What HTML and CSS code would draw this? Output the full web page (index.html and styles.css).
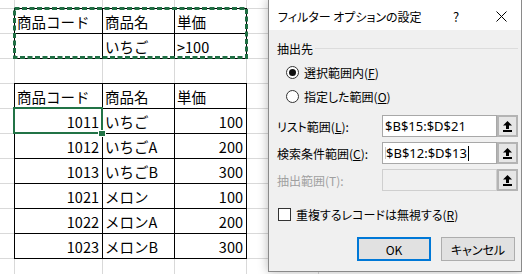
FILE: index.html
```html
<!DOCTYPE html>
<html lang="ja">
<head>
<meta charset="utf-8">
<title>フィルター オプションの設定</title>
<link rel="stylesheet" href="styles.css">
</head>
<body>
<div class="sheet">
  <div class="crit">
    <table class="tbl">
      <colgroup><col class="c1"><col class="c2"><col class="c3"></colgroup>
      <tr><td>商品コード</td><td>商品名</td><td>単価</td></tr>
      <tr><td></td><td>いちご</td><td>&gt;100</td></tr>
    </table>
    <svg class="ants" width="236" height="54" viewBox="0 0 236 54"><rect x="1.5" y="1.5" width="232" height="49" fill="none" stroke="#1f6e43" stroke-width="3" stroke-dasharray="5 2.5"/></svg>
  </div>
  <table class="tbl list">
    <colgroup><col class="c1"><col class="c2"><col class="c3"></colgroup>
    <tr><td>商品コード</td><td>商品名</td><td>単価</td></tr>
    <tr><td class="num sel">1011</td><td>いちご</td><td class="num">100</td></tr>
    <tr><td class="num">1012</td><td>いちごA</td><td class="num">200</td></tr>
    <tr><td class="num">1013</td><td>いちごB</td><td class="num">300</td></tr>
    <tr><td class="num">1021</td><td>メロン</td><td class="num">100</td></tr>
    <tr><td class="num">1022</td><td>メロンA</td><td class="num">200</td></tr>
    <tr><td class="num">1023</td><td>メロンB</td><td class="num">300</td></tr>
  </table>
</div>

<div class="dialog">
  <div class="titlebar">
    <span class="title">フィルター オプションの設定</span>
    <span class="help">?</span>
    <svg class="close" width="11" height="11" viewBox="0 0 11 11"><path d="M0.5 0.5 L10.5 10.5 M10.5 0.5 L0.5 10.5" stroke="#000" stroke-width="1" fill="none"/></svg>
  </div>
  <div class="body">
    <div class="group"><span>抽出先</span><span class="rule"></span></div>
    <div class="radio"><span class="rb on"></span><span>選択範囲内(<u>F</u>)</span></div>
    <div class="radio"><span class="rb"></span><span>指定した範囲(<u>O</u>)</span></div>
    <div class="fields">
      <div class="field">
        <span class="lbl">リスト範囲(<u>L</u>):</span>
        <span class="input">$B$15:$D$21</span>
        <span class="pick"><svg width="9" height="11" viewBox="0 0 9 11"><path d="M4.5 0 L9 4.5 L6 4.5 L6 8 L3 8 L3 4.5 L0 4.5 Z" fill="#000"/><rect x="0" y="9" width="9" height="2" fill="#000"/></svg></span>
      </div>
      <div class="field">
        <span class="lbl">検索条件範囲(<u>C</u>):</span>
        <span class="input active"><span class="ghost"></span>$B$12:$D$13<span class="caret"></span></span>
        <span class="pick"><svg width="9" height="11" viewBox="0 0 9 11"><path d="M4.5 0 L9 4.5 L6 4.5 L6 8 L3 8 L3 4.5 L0 4.5 Z" fill="#000"/><rect x="0" y="9" width="9" height="2" fill="#000"/></svg></span>
      </div>
      <div class="field disabled">
        <span class="lbl">抽出範囲(T):</span>
        <span class="input"></span>
        <span class="pick"><svg width="9" height="11" viewBox="0 0 9 11"><path d="M4.5 0 L9 4.5 L6 4.5 L6 8 L3 8 L3 4.5 L0 4.5 Z" fill="#000"/><rect x="0" y="9" width="9" height="2" fill="#000"/></svg></span>
      </div>
    </div>
    <div class="check"><span class="cb"></span><span>重複するレコードは無視する(<u>R</u>)</span></div>
    <div class="buttons">
      <span class="btn default">OK</span>
      <span class="btn">キャンセル</span>
    </div>
  </div>
</div>
</body>
</html>
```

FILE: styles.css
```css
html, body {
  margin: 0;
  padding: 0;
  background: #fff;
}
body {
  width: 522px;
  height: 274px;
  overflow: hidden;
  position: relative;
  font-family: "Noto Sans CJK JP", "Noto Sans", sans-serif;
  color: #000;
}

/* ---------- spreadsheet ---------- */
.sheet {
  box-sizing: border-box;
  height: 274px;
  padding: 8px 0 0 14px;
  background-color: #fff;
  background-image:
    linear-gradient(to right,
      transparent 14px, #d9d9d9 14px 15px,
      transparent 15px 102px, #d9d9d9 102px 103px,
      transparent 103px 174px, #d9d9d9 174px 175px,
      transparent 175px 246px, #d9d9d9 246px 247px,
      transparent 247px 318px, #d9d9d9 318px 319px,
      transparent 319px),
    repeating-linear-gradient(to bottom, #d9d9d9 0 1px, transparent 1px 25px);
  background-position: 0 0, 0 8px;
  font-size: 14.5px;
}
.crit {
  position: relative;
  width: 233px;
}
.tbl {
  border-collapse: collapse;
  table-layout: fixed;
  width: 233px;
  background: #fff;
}
.tbl col.c1 { width: 88px; }
.tbl col.c2 { width: 72px; }
.tbl col.c3 { width: 72px; }
.tbl td {
  border: 1px solid #000;
  height: 24px;
  padding: 1px 3px 0 2px;
  line-height: 23px;
  white-space: nowrap;
  overflow: visible;
  box-sizing: border-box;
}
.tbl td.num { text-align: right; }
.list { margin-top: 24px; }
.tbl td.sel { position: relative; }
.tbl td.sel::before {
  content: "";
  position: absolute;
  left: -2px; top: -2px; right: -1px; bottom: -1px;
  border: 2px solid #217346;
}
.tbl td.sel::after {
  content: "";
  position: absolute;
  right: -4px; bottom: -4px;
  width: 6px; height: 5px;
  background: #217346;
  border: 1px solid #fff;
}
.ants {
  position: absolute;
  left: -1.5px;
  top: -1.5px;
  pointer-events: none;
}

/* ---------- dialog ---------- */
.dialog {
  position: absolute;
  left: 268px;
  top: -1px;
  width: 254px;
  height: 273px;
  box-sizing: border-box;
  border: 1px solid #8a8a8a;
  background: #f0f0f0;
  box-shadow: 0 0 10px rgba(0,0,0,0.28);
  font-size: 12px;
  font-feature-settings: "palt";
  display: flex;
  flex-direction: column;
}
.titlebar {
  height: 30px;
  background: #fff;
  display: flex;
  align-items: center;
  padding: 2px 0 0 9px;
  box-sizing: border-box;
}
.title { flex: 1; font-size: 12px; }
.help { width: 12px; margin-right: 31px; font-size: 13px; }
.close { margin-right: 14px; }

.body {
  padding: 6px 3px 0 8px;
  display: flex;
  flex-direction: column;
}
.group {
  height: 24px;
  display: flex;
  align-items: center;
  gap: 2px;
}
.group .rule {
  flex: 1;
  height: 1px;
  background: #dcdcdc;
}
.radio, .check {
  height: 24px;
  display: flex;
  align-items: center;
}
.rb {
  width: 11px;
  height: 11px;
  border: 1px solid #333;
  border-radius: 50%;
  background: #fff;
  margin: 0 5px 0 9px;
  position: relative;
}
.rb.on::after {
  content: "";
  position: absolute;
  left: 2px; top: 2px;
  width: 7px; height: 7px;
  border-radius: 50%;
  background: #111;
}
u { text-decoration: underline; text-underline-offset: 1px; }

.fields {
  margin-top: 7px;
  display: flex;
  flex-direction: column;
  gap: 5px;
}
.field {
  display: flex;
  align-items: center;
  height: 22px;
}
.lbl { width: 105px; }
.input {
  box-sizing: border-box;
  width: 115px;
  height: 22px;
  border: 1px solid #a8a8a8;
  background: #fff;
  display: flex;
  align-items: center;
  padding-left: 2px;
  font-family: "Noto Sans", "Liberation Sans", sans-serif;
  font-size: 13px;
  position: relative;
}
.ghost {
  width: 1px;
  height: 12px;
  background: #c8c8c8;
  margin-right: 0;
}
.caret {
  width: 1px;
  height: 15px;
  background: #000;
  margin-left: 1px;
}
.pick {
  box-sizing: border-box;
  width: 21px;
  height: 22px;
  border: 2px solid #b4b4b4;
  background: #e6e6e6;
  display: flex;
  align-items: center;
  justify-content: center;
}
.field.disabled .lbl { color: #a0a0a0; }
.field.disabled .input {
  background: #f0f0f0;
  border-color: #cfcfcf;
}

.check {
  margin-top: 11px;
}
.cb {
  width: 11px;
  height: 11px;
  border: 1px solid #333;
  background: #fff;
  margin: 0 5px 0 1px;
}
.buttons {
  margin-top: 11px;
  display: flex;
  justify-content: flex-end;
  gap: 10px;
  padding-right: 3px;
}
.btn {
  box-sizing: border-box;
  width: 74px;
  height: 24px;
  border: 1px solid #adadad;
  background: #e1e1e1;
  display: flex;
  align-items: center;
  justify-content: center;
  font-size: 12px;
}
.btn.default {
  border: 2px solid #0078d7;
}
```
